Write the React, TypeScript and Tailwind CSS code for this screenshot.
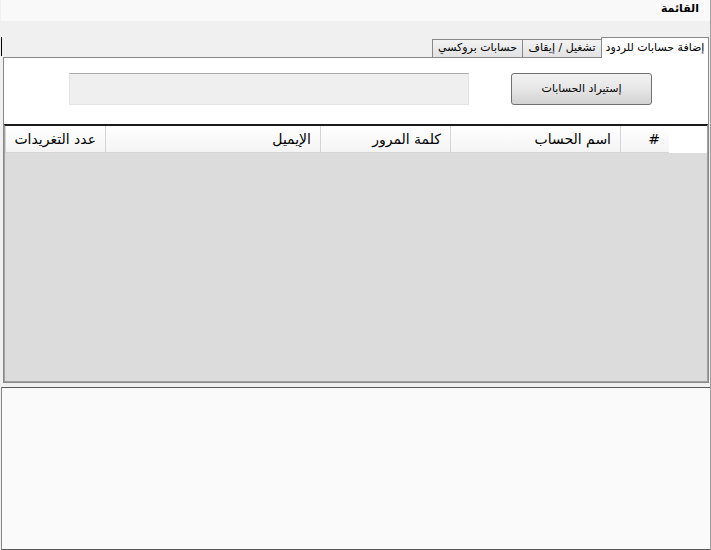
import React from 'react'

const columns = [
  { title: '#', w: 'w-[49px]' },
  { title: 'اسم الحساب', w: 'w-[170px]' },
  { title: 'كلمة المرور', w: 'w-[130px]' },
  { title: 'الإيميل', w: 'w-[215px]' },
  { title: 'عدد التغريدات', w: 'w-[100px]' },
]

export default function App() {
  return (
    <div
      dir="rtl"
      className="w-[711px] h-[550px] bg-[#f0f0f0] flex flex-col font-['DejaVu_Sans',sans-serif] text-black border-l border-[#f0f0f0] border-r border-r-[#a0a0a0] overflow-hidden"
    >
      {/* Window menu strip */}
      <div className="h-[21px] bg-[#f9f9f9] flex items-start pr-[11px] pt-[2px]">
        <span className="text-[11px] font-bold leading-[14px]">القائمة</span>
      </div>

      <div className="h-[16px]" />

      {/* Tabs */}
      <div className="h-[20px] flex justify-between items-end relative z-10">
        <div className="flex items-end pr-[1px]">
          <div className="h-[21px] w-[108px] bg-white border border-[#898989] border-b-0 -mb-px flex items-center justify-center text-[11px]">
            إضافة حسابات للردود
          </div>
          <div className="h-[18px] w-[79px] bg-gradient-to-b from-[#f3f3f3] to-[#e2e2e2] border border-[#898989] border-r-0 border-b-0 flex items-center justify-center text-[11px]">
            تشغيل / إيقاف
          </div>
          <div className="h-[18px] w-[90px] bg-gradient-to-b from-[#f3f3f3] to-[#e2e2e2] border border-[#898989] border-r-0 border-b-0 flex items-center justify-center text-[11px]">
            حسابات بروكسي
          </div>
        </div>
        <div className="w-[2px] h-[19px] bg-black -ml-px mb-[1px]" />
      </div>

      {/* Tab page */}
      <div className="h-[326px] mx-[1px] ml-[2px] border border-[#898989] bg-white flex flex-col">
        <div className="h-[66px] flex items-start pt-[15px] pr-[56px]">
          <button className="w-[141px] h-[32px] rounded-[3px] border border-[#707070] bg-gradient-to-b from-[#f2f2f2] via-[#e6e6e6] to-[#d2d2d2] text-[11px] flex items-center justify-center">
            إستيراد الحسابات
          </button>
          <div className="w-[400px] h-[32px] mr-[42px] bg-[#efefef] border border-[#e3e3e3] border-t-[#ababab]" />
        </div>

        {/* Accounts grid */}
        <div className="flex-1 flex flex-col border-t-2 border-t-[#1a1a1a] border-x border-x-[#a0a0a0] border-b border-b-[#a0a0a0]">
          <div className="h-[27px] flex bg-white">
            <div className="w-[38px]" />
            {columns.map((c) => (
              <div
                key={c.title}
                className={`${c.w} h-full bg-gradient-to-b from-white to-[#f4f4f4] border-l border-[#d5d5d5] border-b flex items-center pr-[9px] text-[14px]`}
              >
                {c.title}
              </div>
            ))}
          </div>
          <div className="flex-1 bg-[#dcdcdc]" />
        </div>
      </div>

      <div className="h-[4px]" />

      {/* Log box */}
      <div className="flex-1 bg-[#fafafa] border border-[#5a5a5a] border-l-[#888888] -mr-px" />
    </div>
  )
}
